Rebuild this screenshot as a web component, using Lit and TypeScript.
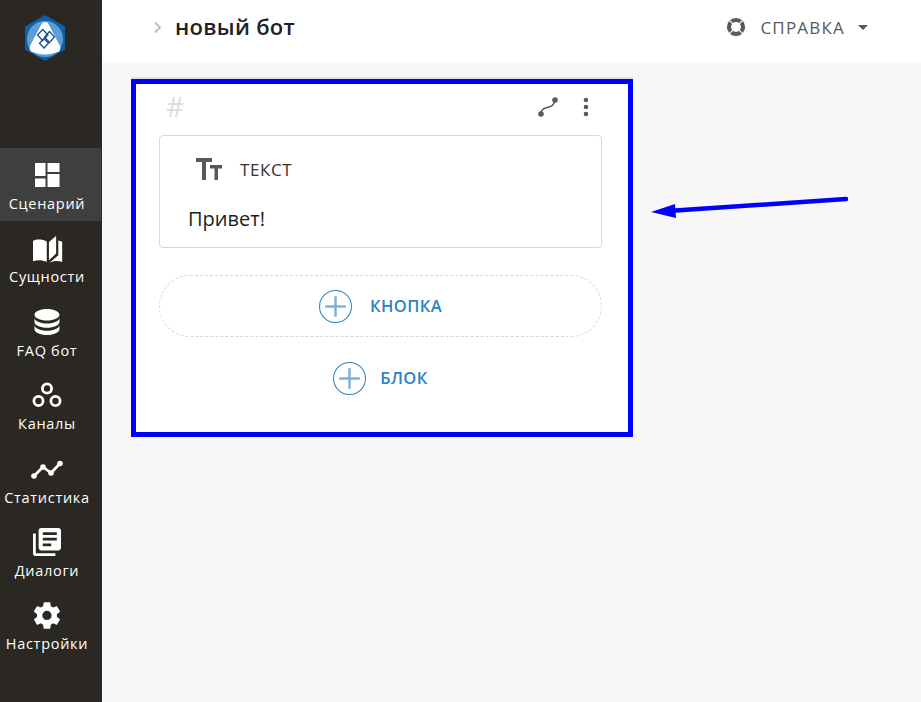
import { LitElement, html, css, svg } from "lit";
import { customElement } from "lit/decorators.js";

const icons: Record<string, unknown> = {
  dash: svg`<rect x="4" y="3" width="10.5" height="13"/><rect x="4" y="18.5" width="10.5" height="8.5"/><rect x="16.5" y="3" width="12" height="9"/><rect x="16.5" y="14" width="12" height="13"/>`,
  book: svg`<g transform="translate(-.2 .8) scale(1.1)"><path d="M2 6.5C5 4.8 10.5 4.8 14.5 7V25.5C10.5 23.8 6 23.6 2 25Z"/><path d="M16.5 7.5 23 2V18L16.5 24Z"/><path d="M25 6.2C26.2 6.4 27.2 6.8 28.5 7.2V25.6C25 24.4 20.5 24.4 17 26.4L25 19.5Z"/></g>`,
  db: svg`<path transform="translate(-2.75 -2.4) scale(1.56 1.45)" d="M12,3C7.58,3 4,4.79 4,7C4,9.21 7.58,11 12,11C16.42,11 20,9.21 20,7C20,4.79 16.42,3 12,3M4,9V12C4,14.21 7.58,16 12,16C16.42,16 20,14.21 20,12V9C20,11.21 16.42,13 12,13C7.58,13 4,11.21 4,9M4,14V17C4,19.21 7.58,21 12,21C16.42,21 20,19.21 20,17V14C20,16.21 16.42,18 12,18C7.58,18 4,16.21 4,14Z"/>`,
  chan: svg`<g fill="none" stroke="#fff" stroke-width="2.8"><circle cx="16" cy="8.5" r="4.6"/><circle cx="7.5" cy="21" r="4.6"/><circle cx="24.5" cy="21" r="4.6"/></g>`,
  stat: svg`<path d="M3 22 12 13 20 19 29 9.5" fill="none" stroke="#fff" stroke-width="2.8"/><circle cx="3" cy="22" r="2.8"/><circle cx="12" cy="13" r="2.8"/><circle cx="20" cy="19" r="2.8"/><circle cx="29" cy="9.5" r="2.8"/>`,
  lib: svg`<path transform="translate(-.8 -1.8) scale(1.4)" d="M4,6H2V20A2,2 0 0,0 4,22H18V20H4V6M20,2H8A2,2 0 0,0 6,4V16A2,2 0 0,0 8,18H20A2,2 0 0,0 22,16V4A2,2 0 0,0 20,2M19,11H9V9H19V11M15,15H9V13H15V15M19,7H9V5H19V7Z"/>`,
  cog: svg`<path transform="translate(0 -.5) scale(1.33)" d="M12,15.5A3.5,3.5 0 0,1 8.5,12A3.5,3.5 0 0,1 12,8.5A3.5,3.5 0 0,1 15.5,12A3.5,3.5 0 0,1 12,15.5M19.43,12.97C19.47,12.65 19.5,12.33 19.5,12C19.5,11.67 19.47,11.34 19.43,11L21.54,9.37C21.73,9.22 21.78,8.95 21.66,8.73L19.66,5.27C19.54,5.05 19.27,4.96 19.05,5.05L16.56,6.05C16.04,5.66 15.5,5.32 14.87,5.07L14.5,2.42C14.46,2.18 14.25,2 14,2H10C9.75,2 9.54,2.18 9.5,2.42L9.13,5.07C8.5,5.32 7.96,5.66 7.44,6.05L4.95,5.05C4.73,4.96 4.46,5.05 4.34,5.27L2.34,8.73C2.21,8.95 2.27,9.22 2.46,9.37L4.57,11C4.53,11.34 4.5,11.67 4.5,12C4.5,12.33 4.53,12.65 4.57,12.97L2.46,14.63C2.27,14.78 2.21,15.05 2.34,15.27L4.34,18.73C4.46,18.95 4.73,19.03 4.95,18.95L7.44,17.94C7.96,18.34 8.5,18.68 9.13,18.93L9.5,21.58C9.54,21.82 9.75,22 10,22H14C14.25,22 14.46,21.82 14.5,21.58L14.87,18.93C15.5,18.67 16.04,18.34 16.56,17.94L19.05,18.95C19.27,19.03 19.54,18.95 19.66,18.73L21.66,15.27C21.78,15.05 21.73,14.78 21.54,14.63L19.43,12.97Z"/>`,
};

const items = [
  ["dash", "Сценарий"],
  ["book", "Сущности"],
  ["db", "FAQ бот"],
  ["chan", "Каналы"],
  ["stat", "Статистика"],
  ["lib", "Диалоги"],
  ["cog", "Настройки"],
];

const plus = html`<svg class="plus" viewBox="0 0 32 32">
  <circle cx="16" cy="16" r="15.5" fill="none" stroke="#2a84c4" stroke-width="1"/>
  <path d="M16 6V26M6 16H26" stroke="#7ab3dc" stroke-width="2.4"/>
</svg>`;

@customElement("app-root")
export class AppRoot extends LitElement {
  static styles = css`
    :host {
      display: block;
      position: relative;
      width: 921px;
      height: 702px;
      overflow: hidden;
      font-family: "Open Sans", "Noto Sans", sans-serif;
    }
    .page { display: flex; height: 702px; }
    .side {
      width: 102px;
      flex: none;
      background: #2b2823;
      color: #fff;
      display: flex;
      flex-direction: column;
    }
    .logo { display: block; width: 42px; height: 46px; margin: 15px 0 87px 24px; }
    .nav { display: grid; grid-auto-rows: 73.4px; }
    .item {
      width: 101px;
      display: flex;
      flex-direction: column;
      align-items: center;
      padding: 12px 7px 0 0;
      box-sizing: border-box;
    }
    .item.on { background: #3f3f3f; }
    .item svg { width: 32px; height: 30px; fill: #fff; flex: none; }
    .item span {
      font-size: 14.5px;
      line-height: 16px;
      margin-top: 6px;
      font-weight: 500;
      letter-spacing: .7px;
      white-space: nowrap;
    }
    .main { flex: 1; display: flex; flex-direction: column; background: #f7f7f7; min-width: 0; }
    .head {
      height: 62px;
      flex: none;
      background: #fff;
      display: flex;
      align-items: center;
      padding: 0 53px 8px 51px;
      box-sizing: border-box;
    }
    .chev { width: 9px; height: 13px; margin-right: 13px; }
    .title { font-size: 22px; font-weight: 600; color: #22211f; letter-spacing: .3px; flex: 1; margin-top: -2px; }
    .help { display: flex; align-items: center; color: #555a5f; font-size: 17px; font-weight: 500; letter-spacing: 1.2px; }
    .help svg.buoy { width: 20px; height: 20px; margin-right: 14px; }
    .caret { width: 0; height: 0; border: 5px solid transparent; border-top-color: #555a5f; border-bottom: 0; margin-left: 13px; }
    .content { padding: 17px 0 0 29px; }
    .card {
      width: 502px;
      height: 358px;
      box-sizing: border-box;
      border: 5px solid #0000ff;
      background: #fff;
      padding: 0 26px 0 23px;
      display: flex;
      flex-direction: column;
      box-shadow: 0 -2px 0 #e2e2e2;
    }
    .top { height: 51px; display: flex; align-items: center; padding: 0 6px 0 7px; box-sizing: border-box; }
    .hash { color: #dcdcdc; font-size: 28px; font-weight: 400; flex: 1; margin-top: -7px; line-height: 1; }
    .route { width: 22px; height: 22px; margin-right: 24px; margin-top: -6px; }
    .dots { width: 6px; height: 20px; margin-top: -6px; margin-right: 7px; }
    .box {
      height: 113px;
      box-sizing: border-box;
      border: 1px solid #d8d8d8;
      border-radius: 4px;
      padding: 0 0 0 28px;
      display: flex;
      flex-direction: column;
    }
    .kind { display: flex; align-items: center; height: 66px; padding-left: 7px; flex: none; }
    .tt { width: 28px; height: 24px; margin-right: 17px; }
    .kind span { font-size: 17px; font-weight: 500; color: #33312e; letter-spacing: .6px; }
    .msg { font-size: 20px; color: #1d1d1d; line-height: 34px; }
    .addb {
      height: 62px;
      margin-top: 27px;
      box-sizing: border-box;
      border: 1px dashed #d8d8d8;
      border-radius: 31px;
      display: flex;
      align-items: center;
      justify-content: center;
      gap: 18px;
    }
    .addl { display: flex; align-items: center; justify-content: center; gap: 14px; height: 82px; }
    .add { color: #2a84c4; font-size: 16.5px; font-weight: 600; letter-spacing: .4px; margin-top: -2px; }
    .plus { width: 33px; height: 33px; flex: none; }
    .arrow { position: absolute; left: 648px; top: 194px; width: 200px; height: 26px; }
  `;

  render() {
    return html`<div class="page">
        <aside class="side">
          <svg class="logo" viewBox="0 0 42 46">
            <path d="M21 0 41 11.5V34.5L21 46 1 34.5V11.5Z" fill="#0f5fa8"/>
            <circle cx="21" cy="24" r="18" fill="#5b9fd6"/>
            <path d="M21 7C23 7 24 8 25 10L35.5 30C37.5 34 36 37 32 37.5 25 40 17 40 10 37.5 6 37 4.5 34 6.5 30L17 10C18 8 19 7 21 7Z" fill="#fff"/>
            <g fill="none" stroke="#1d4f8c" stroke-width="1.3">
              <path d="M18.7 14.5 24 20 18.7 25.5 13.5 20Z"/>
              <path d="M25.5 16.5 30.5 22 25.5 27.5 20.5 22Z"/>
              <path d="M20 23.5 24.5 28.3 20 33 15.5 28.3Z"/>
            </g>
          </svg>
          <nav class="nav">
            ${items.map(
              ([k, t], i) => html`<div class="item ${i === 0 ? "on" : ""}">
                <svg viewBox="0 0 32 30">${icons[k]}</svg><span>${t}</span>
              </div>`
            )}
          </nav>
        </aside>
        <div class="main">
          <header class="head">
            <svg class="chev" viewBox="0 0 9 13"><path d="M2 1.5 7 6.5 2 11.5" fill="none" stroke="#b5bac0" stroke-width="1.8"/></svg>
            <div class="title">новый бот</div>
            <div class="help">
              <svg class="buoy" viewBox="0 0 20 20">
                <circle cx="10" cy="10" r="7" fill="none" stroke="#555a5f" stroke-width="4.2"/>
                <path d="M3.5 3.5 7.5 7.5M16.5 3.5 12.5 7.5M3.5 16.5 7.5 12.5M16.5 16.5 12.5 12.5" stroke="#fff" stroke-width="1.1"/>
              </svg>
              СПРАВКА
              <div class="caret"></div>
            </div>
          </header>
          <div class="content">
            <section class="card">
              <div class="top">
                <div class="hash">#</div>
                <svg class="route" viewBox="0 0 22 22" fill="#555a5f">
                  <circle cx="4" cy="18" r="2.8"/><circle cx="18" cy="4" r="2.8"/>
                  <path d="M4 18C4 12 9 12 12 11S17 9 18 4" fill="none" stroke="#555a5f" stroke-width="1.6"/>
                </svg>
                <svg class="dots" viewBox="0 0 6 20" fill="#555a5f">
                  <circle cx="3" cy="3" r="2.3"/><circle cx="3" cy="10" r="2.3"/><circle cx="3" cy="17" r="2.3"/>
                </svg>
              </div>
              <div class="box">
                <div class="kind">
                  <svg class="tt" viewBox="0 0 28 24" fill="#55595c">
                    <path d="M1 1H17V5H11V23H7V5H1Z"/><path d="M15 8H27V11.5H23V23H19.5V11.5H15Z"/>
                  </svg>
                  <span>ТЕКСТ</span>
                </div>
                <div class="msg">Привет!</div>
              </div>
              <div class="addb">${plus}<span class="add">КНОПКА</span></div>
              <div class="addl">${plus}<span class="add">БЛОК</span></div>
            </section>
          </div>
        </div>
      </div>
      <svg class="arrow" viewBox="0 0 200 26">
        <path d="M198 5 20 17" stroke="#0000ff" stroke-width="4.5" stroke-linecap="round" fill="none"/>
        <path d="M3 18 27 10 28 24Z" fill="#0000ff"/>
      </svg>`;
  }
}
